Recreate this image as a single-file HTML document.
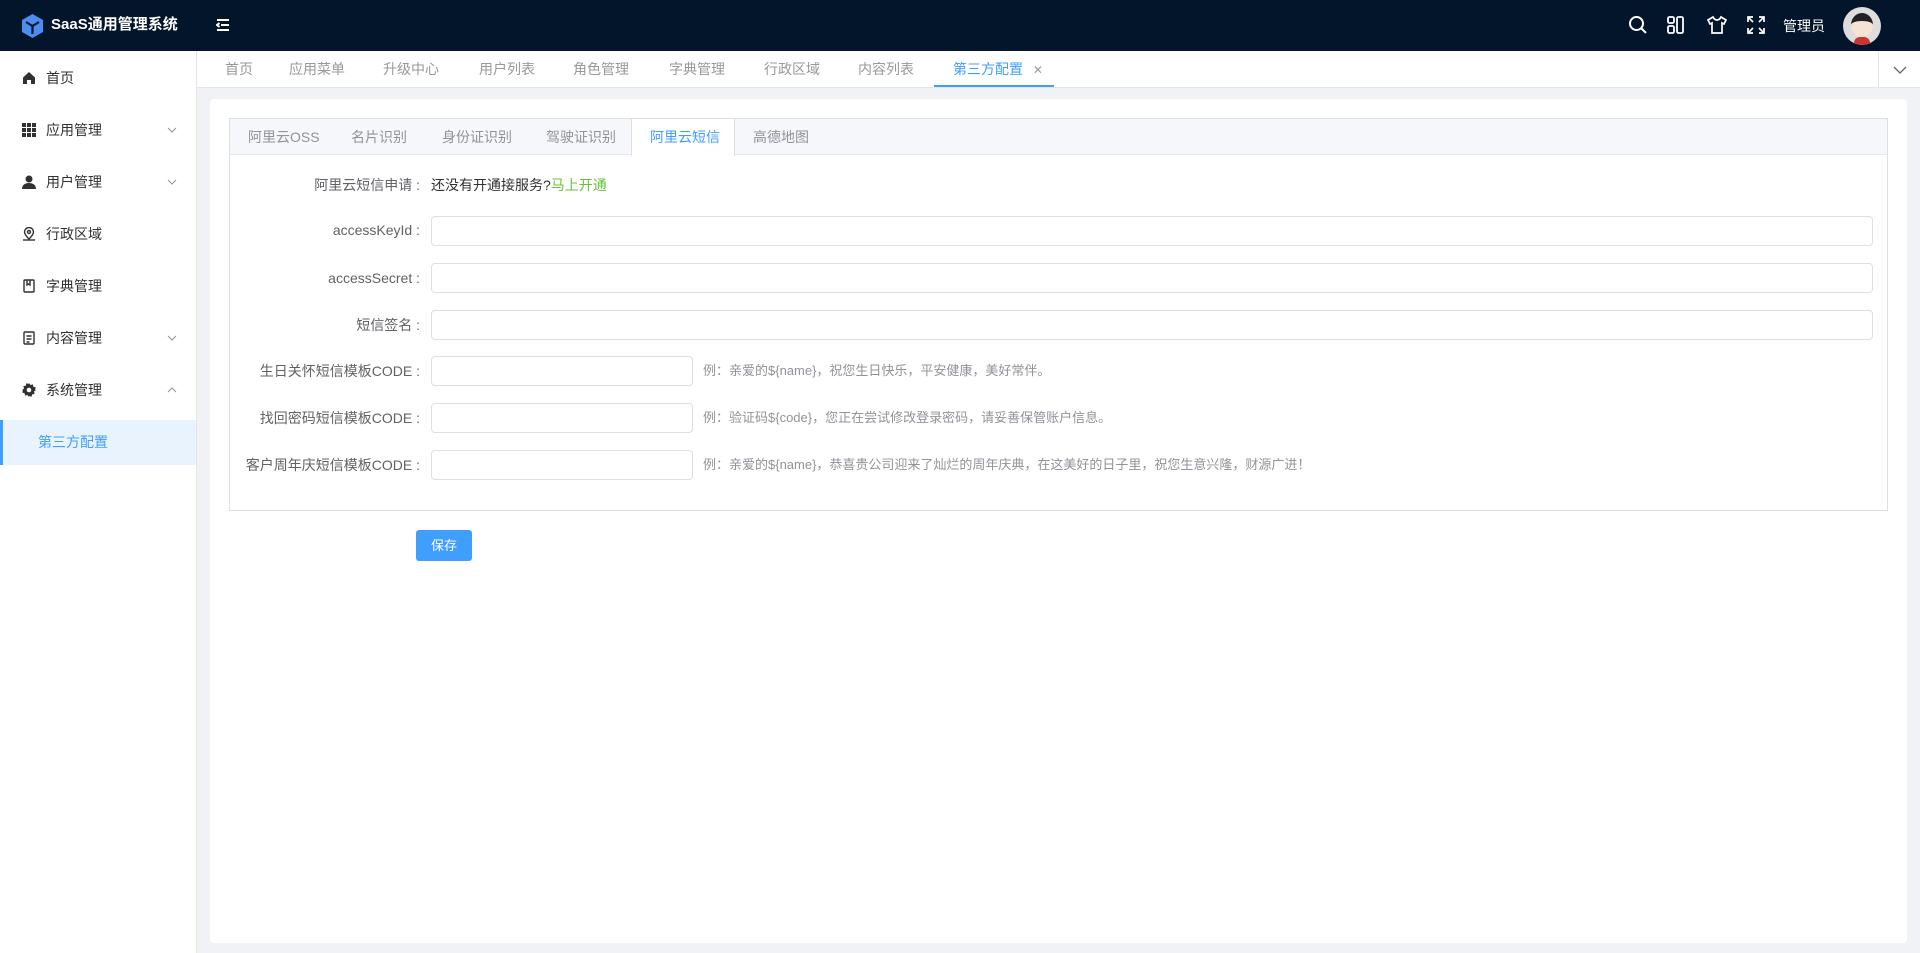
<!DOCTYPE html>
<html><head><meta charset="utf-8"><style>
*{box-sizing:border-box;margin:0;padding:0}
body{width:1920px;height:953px;overflow:hidden;font-family:"Liberation Sans","Noto Sans CJK SC",sans-serif;font-size:14px;color:#606266;background:#f0f2f5;position:relative}
.hd{position:absolute;left:0;top:0;width:1920px;height:51px;background:#03152b;color:#fff}
.abs{position:absolute}
.sb{position:absolute;left:0;top:51px;width:197px;height:902px;background:#fff;border-right:1px solid #e6e6e6}
.mi{position:absolute;left:0;width:196px;height:52px;line-height:52px;padding-left:46px;color:#303133;font-size:14px}
.mi .ic{position:absolute;left:22px;top:19px;width:14px;height:14px}
.mi .ar{position:absolute;left:167px;top:23px;width:10px;height:6px}
.tb{position:absolute;left:197px;top:51px;width:1723px;height:37px;background:#fff;border-bottom:1px solid #e6e6e6}
.tb span{position:absolute;top:0;line-height:37px;color:#999;font-size:14px}
.card{position:absolute;left:210px;top:99px;width:1697px;height:844px;background:#fff;border-radius:4px}
.it{position:absolute;left:229px;top:118px;width:1659px;height:393px;border:1px solid #dcdfe6;background:#fff}
.ith{position:absolute;left:0;top:0;width:1657px;height:36px;background:#f5f7fa;border-bottom:1px solid #e4e7ed}
.ith span{position:absolute;top:0;line-height:36px;color:#909399;font-size:14px}
.lbl{position:absolute;right:1500px;font-size:14px;color:#606266;text-align:right;white-space:nowrap;line-height:30px}
.inp{position:absolute;left:431px;height:30px;border:1px solid #dcdfe6;border-radius:4px;background:#fff}
.hint{position:absolute;left:703px;line-height:30px;font-size:13px;color:#909399;white-space:nowrap}
</style></head><body>
<div class="hd">
 <svg class="abs" style="left:22px;top:14px" width="21" height="24" viewBox="0 0 21 24"><path d="M10.5 0L21 6v12l-10.5 6L0 18V6z" fill="#4a8ef0"/><path d="M4 8l6.5 4 6.5-4M10.5 12v8" stroke="#03152b" stroke-width="2.2" fill="none"/></svg>
 <div class="abs" style="left:51px;top:15px;font-size:15px;font-weight:bold;line-height:20px">SaaS通用管理系统</div>
 <svg class="abs" style="left:216px;top:18px" width="14" height="14" viewBox="0 0 14 14" stroke="#fff" stroke-width="2" fill="none"><path d="M1 2h12M5 7h8M1 12h12M3.5 5L1 7l2.5 2"/></svg>
 <svg class="abs" style="left:1628px;top:15px" width="20" height="20" viewBox="0 0 20 20" stroke="#fff" stroke-width="2" fill="none"><circle cx="8.5" cy="8.5" r="6.5"/><path d="M13.5 13.5L18 18"/></svg>
 <svg class="abs" style="left:1666px;top:15px" width="20" height="20" viewBox="0 0 20 20" stroke="#fff" stroke-width="1.8" fill="none"><rect x="2" y="2" width="6" height="6" rx="1.5"/><rect x="2" y="11" width="6" height="7" rx="1.5"/><rect x="11" y="2" width="6" height="16" rx="1.5"/></svg>
 <svg class="abs" style="left:1706px;top:15px" width="22" height="20" viewBox="0 0 22 20" stroke="#fff" stroke-width="1.7" fill="none"><path d="M7 2L2 5l2 4 2-1v10h10V8l2 1 2-4-5-3c-1 2-2.5 3-4 3S8 4 7 2z"/></svg>
 <svg class="abs" style="left:1746px;top:15px" width="20" height="20" viewBox="0 0 20 20" stroke="#fff" stroke-width="1.7" fill="none"><path d="M2 7V2h5M2 2l5 5M18 7V2h-5M18 2l-5 5M2 13v5h5M2 18l5-5M18 13v5h-5M18 18l-5-5"/></svg>
 <div class="abs" style="left:1783px;top:16px;font-size:14px;line-height:20px">管理员</div>
 <div class="abs" style="left:1843px;top:7px;width:38px;height:38px;border-radius:50%;background:#ddd;overflow:hidden"><div class="abs" style="left:8px;top:6px;width:22px;height:24px;border-radius:50%;background:#f6e3d3;border-top:8px solid #222"></div><div class="abs" style="left:11px;top:30px;width:16px;height:10px;background:#c33;border-radius:6px 6px 0 0"></div></div>
</div>
<div class="sb">
 <div class="mi" style="top:1px"><svg class="ic" viewBox="0 0 14 14"><path d="M7 1L1 6.5V13h4V9h4v4h4V6.5z" fill="#303133"/></svg>首页</div>
 <div class="mi" style="top:53px"><svg class="ic" viewBox="0 0 14 14" fill="#303133"><rect x="0" y="0" width="4" height="4"/><rect x="5" y="0" width="4" height="4"/><rect x="10" y="0" width="4" height="4"/><rect x="0" y="5" width="4" height="4"/><rect x="5" y="5" width="4" height="4"/><rect x="10" y="5" width="4" height="4"/><rect x="0" y="10" width="4" height="4"/><rect x="5" y="10" width="4" height="4"/><rect x="10" y="10" width="4" height="4"/></svg>应用管理<svg class="ar" viewBox="0 0 10 6" stroke="#909399" fill="none"><path d="M1 1l4 4 4-4"/></svg></div>
 <div class="mi" style="top:105px"><svg class="ic" viewBox="0 0 14 14" fill="#303133"><circle cx="7" cy="4" r="3.5"/><path d="M0 14c0-4 3-6 7-6s7 2 7 6z"/></svg>用户管理<svg class="ar" viewBox="0 0 10 6" stroke="#909399" fill="none"><path d="M1 1l4 4 4-4"/></svg></div>
 <div class="mi" style="top:157px"><svg class="ic" viewBox="0 0 14 14" stroke="#303133" stroke-width="1.4" fill="none"><path d="M7 12S2.5 7.5 2.5 5a4.5 4.5 0 019 0C11.5 7.5 7 12 7 12z"/><circle cx="7" cy="5" r="1.5"/><path d="M1 13h12"/></svg>行政区域</div>
 <div class="mi" style="top:209px"><svg class="ic" viewBox="0 0 14 14" stroke="#303133" stroke-width="1.4" fill="none"><rect x="2" y="1" width="10" height="12" rx="1"/><path d="M5 1v5l1.5-1 1.5 1V1"/></svg>字典管理</div>
 <div class="mi" style="top:261px"><svg class="ic" viewBox="0 0 14 14" stroke="#303133" stroke-width="1.4" fill="none"><rect x="2" y="1" width="10" height="12" rx="1"/><path d="M4.5 5h5M4.5 8h5M4.5 11h3"/></svg>内容管理<svg class="ar" viewBox="0 0 10 6" stroke="#909399" fill="none"><path d="M1 1l4 4 4-4"/></svg></div>
 <div class="mi" style="top:313px"><svg class="ic" viewBox="0 0 14 14"><path d="M7 0l1.5 2 2.4-.6.5 2.4 2.4.7-.7 2.4L14 7l-2 1.5.6 2.4-2.4.5-.7 2.4-2.4-.7L7 14l-1.5-2-2.4.6-.5-2.4-2.4-.7.7-2.4L0 7l2-1.5-.6-2.4 2.4-.5.7-2.4 2.4.7z" fill="#303133"/><circle cx="7" cy="7" r="2.3" fill="#fff"/></svg>系统管理<svg class="ar" viewBox="0 0 10 6" stroke="#909399" fill="none"><path d="M1 5l4-4 4 4"/></svg></div>
 <div class="mi" style="top:369px;height:45px;line-height:45px;padding-left:35px;background:#e8f3fe;color:#409eff;border-left:3px solid #409eff">第三方配置</div>
</div>
<div class="tb">
 <span style="left:28px">首页</span><span style="left:92px">应用菜单</span><span style="left:186px">升级中心</span><span style="left:282px">用户列表</span><span style="left:376px">角色管理</span><span style="left:472px">字典管理</span><span style="left:567px">行政区域</span><span style="left:661px">内容列表</span>
 <span style="left:756px;color:#409eff">第三方配置 <span style="position:static;font-size:12px;margin-left:6px">✕</span></span>
 <div class="abs" style="left:737px;top:34px;width:120px;height:2px;background:#409eff"></div>
 <div class="abs" style="left:1681px;top:0;width:42px;height:37px;border-left:1px solid #e6e6e6"><svg class="abs" style="left:14px;top:15px" width="14" height="8" viewBox="0 0 14 8" stroke="#606266" stroke-width="1.3" fill="none"><path d="M1 1l6 6 6-6"/></svg></div>
</div>
<div class="card"></div>
<div class="it">
 <div class="ith">
  <span style="left:18px">阿里云OSS</span><span style="left:121px">名片识别</span><span style="left:212px">身份证识别</span><span style="left:316px">驾驶证识别</span>
  <div class="abs" style="left:401px;top:0;width:104px;height:37px;background:#fff;border-left:1px solid #dcdfe6;border-right:1px solid #dcdfe6"></div>
  <span style="left:420px;color:#409eff">阿里云短信</span><span style="left:523px">高德地图</span>
 </div>
</div>
<div class="lbl" style="top:170px">阿里云短信申请 :</div>
<div class="abs" style="left:431px;top:170px;line-height:30px;color:#303133">还没有开通接服务?<span style="color:#67c23a">马上开通</span></div>
<div class="lbl" style="top:215px">accessKeyId :</div><div class="inp" style="top:216px;width:1442px"></div>
<div class="lbl" style="top:263px">accessSecret :</div><div class="inp" style="top:263px;width:1442px"></div>
<div class="lbl" style="top:310px">短信签名 :</div><div class="inp" style="top:310px;width:1442px"></div>
<div class="lbl" style="top:356px">生日关怀短信模板CODE :</div><div class="inp" style="top:356px;width:262px"></div><div class="hint" style="top:356px">例：亲爱的${name}，祝您生日快乐，平安健康，美好常伴。</div>
<div class="lbl" style="top:403px">找回密码短信模板CODE :</div><div class="inp" style="top:403px;width:262px"></div><div class="hint" style="top:403px">例：验证码${code}，您正在尝试修改登录密码，请妥善保管账户信息。</div>
<div class="lbl" style="top:450px">客户周年庆短信模板CODE :</div><div class="inp" style="top:450px;width:262px"></div><div class="hint" style="top:450px">例：亲爱的${name}，恭喜贵公司迎来了灿烂的周年庆典，在这美好的日子里，祝您生意兴隆，财源广进！</div>
<div class="abs" style="left:416px;top:530px;width:56px;height:31px;background:#409eff;border-radius:3px;color:#fff;font-size:13px;line-height:31px;text-align:center">保存</div>
</body></html>
